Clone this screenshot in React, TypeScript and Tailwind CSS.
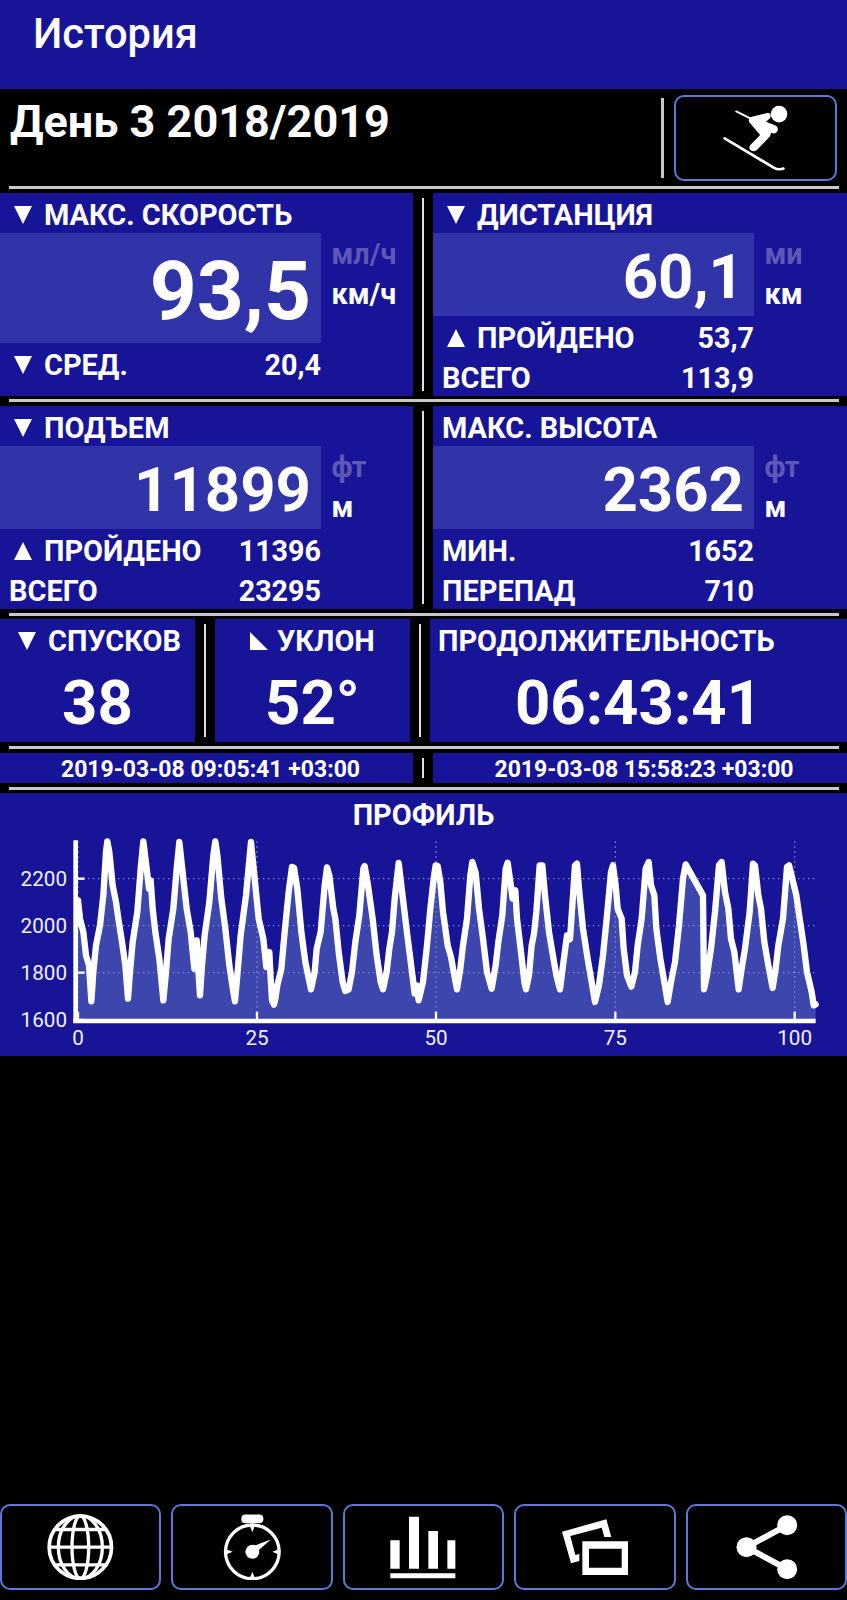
import React from "react";

const profile: [number, number][] = [
  [234, 345], [240, 400], [250, 440], [258, 510], [267, 540], [274, 648], [280, 560], [288, 480], [300, 420],
  [310, 330], [318, 200], [322, 168], [328, 200], [338, 300], [348, 350], [355, 400], [366, 470], [376, 540],
  [384, 640], [390, 560], [398, 470], [412, 380], [422, 250], [430, 168], [440, 250], [447, 310],
  [452, 285], [458, 370], [466, 440], [478, 520], [490, 645], [498, 560], [506, 460], [520, 370], [530, 250],
  [538, 170], [550, 280], [560, 370], [572, 440], [583, 550], [590, 465], [594, 540], [600, 630],
  [606, 540], [614, 450], [628, 350], [640, 210], [646, 168], [652, 210], [664, 340], [676, 430], [688, 540],
  [700, 620], [705, 648], [712, 570], [722, 450], [738, 330], [753, 170], [764, 280], [776, 400],
  [790, 460], [799, 545], [808, 500], [812, 580], [816, 645], [822, 658], [826, 640], [832, 600], [844, 550],
  [854, 440], [866, 320], [876, 245], [882, 247], [892, 310], [904, 440], [916, 530], [933, 612], [944, 560],
  [950, 490], [962, 440], [974, 300], [981, 246], [988, 270], [1000, 370], [1006, 400], [1016, 500], [1028, 590],
  [1036, 617], [1046, 612], [1056, 560], [1066, 470], [1078, 390], [1090, 250], [1094, 242], [1104, 300],
  [1118, 400], [1130, 510], [1142, 590], [1149, 612], [1160, 560], [1168, 490], [1176, 440], [1184, 340],
  [1196, 233], [1210, 350], [1222, 450], [1236, 560], [1244, 625], [1250, 600], [1256, 645],
  [1269, 590], [1281, 480], [1291, 370], [1301, 280], [1307, 240], [1313, 242], [1321, 290], [1329, 380],
  [1343, 480], [1353, 515], [1361, 560], [1371, 612], [1381, 550], [1389, 480], [1401, 400], [1411, 270],
  [1417, 230], [1427, 262], [1437, 370], [1449, 460], [1461, 560], [1475, 610], [1487, 540], [1495, 470],
  [1507, 390], [1517, 250], [1523, 232], [1531, 290], [1538, 340], [1546, 315], [1551, 400], [1563, 500],
  [1573, 590], [1578, 612], [1587, 570], [1595, 480], [1602, 445], [1609, 380], [1619, 240], [1627, 240],
  [1635, 330], [1647, 440], [1657, 500], [1669, 570], [1680, 612], [1689, 540], [1701, 450], [1710, 462],
  [1719, 330], [1725, 240], [1731, 235], [1737, 310], [1749, 430], [1763, 520], [1775, 590], [1785, 650],
  [1797, 600], [1809, 510], [1821, 390], [1833, 260], [1839, 240], [1847, 300], [1853, 370], [1865, 400],
  [1871, 490], [1881, 570], [1894, 604], [1905, 560], [1913, 480], [1925, 400], [1937, 250], [1946, 230],
  [1953, 300], [1963, 330], [1969, 430], [1981, 520], [1993, 590], [2003, 650], [2013, 590], [2025, 530],
  [2037, 420], [2049, 280], [2057, 237], [2109, 330], [2112, 612], [2121, 570], [2133, 490], [2145, 380],
  [2157, 240], [2165, 230], [2175, 320], [2185, 370], [2193, 460], [2203, 500], [2216, 612], [2225, 550],
  [2235, 490], [2249, 380], [2259, 235], [2265, 240], [2275, 330], [2283, 370], [2293, 470], [2305, 540],
  [2318, 608], [2327, 550], [2335, 480], [2349, 400], [2361, 245], [2367, 240], [2377, 280], [2389, 330],
  [2399, 400], [2411, 480], [2421, 560], [2435, 620], [2441, 660], [2447, 657],
];

const yTicks = [
  { label: "2200", y: 280 },
  { label: "2000", y: 421 },
  { label: "1800", y: 562 },
  { label: "1600", y: 704 },
];

const xTicks = [
  { label: "0", x: 234 },
  { label: "25", x: 771 },
  { label: "50", x: 1308 },
  { label: "75", x: 1846 },
  { label: "100", x: 2384 },
];

const shapes = {
  down: "0,0 18,0 9,18",
  up: "0,18 18,18 9,0",
  slope: "0,0 0,18 18,18",
};

const Mark = ({ kind }: { kind: keyof typeof shapes }) => (
  <svg className="w-[18px] h-[18px] shrink-0 fill-white" viewBox="0 0 18 18">
    <polygon points={shapes[kind]} />
  </svg>
);

const HLine = () => <div className="h-[3px] mx-[8.5px] bg-[#c8c8c8] shrink-0" />;

const VLine = () => <div className="w-[2px] my-[5px] bg-[#dedede] shrink-0" />;

type RowProps = { mark?: "down" | "up"; label: string; value?: string };

const Row = ({ mark, label, value }: RowProps) => (
  <div className="h-10 w-[321px] pt-[3px] flex items-center justify-between whitespace-nowrap text-[28.7px] leading-9 font-bold">
    <div className={`flex items-center gap-3 text-[28.95px] ${mark ? "pl-[14px]" : "pl-[9px]"}`}>
      {mark && <Mark kind={mark} />}
      <span>{label}</span>
    </div>
    {value && <span>{value}</span>}
  </div>
);

type PanelProps = {
  title: RowProps;
  value: string;
  units: [string, string];
  rows: RowProps[];
  tall?: boolean;
  className: string;
};

const Panel = ({ title, value, units, rows, tall, className }: PanelProps) => (
  <div className={`h-[203px] bg-[#181498] ${className}`}>
    <Row {...title} />
    <div className="flex">
      <div
        className={`w-[321px] pt-1.5 pr-[10px] flex items-center justify-end bg-[#3034a8] font-bold ${
          tall ? "h-[110px] text-[82px]" : "h-[83px] text-[61.7px]"
        }`}
      >
        {value}
      </div>
      <div className="pl-[10.5px] pt-px h-[83px] text-[28.8px] leading-10 font-bold whitespace-nowrap">
        <div className="text-[#5c58b8]">{units[0]}</div>
        <div>{units[1]}</div>
      </div>
    </div>
    {rows.map((row) => (
      <Row key={row.label} {...row} />
    ))}
  </div>
);

const Stat = ({ children, value, className }: { children: React.ReactNode; value: string; className: string }) => (
  <div className={`h-[123px] bg-[#181498] ${className}`}>
    <div className="h-10 pt-1 flex items-center text-[28.95px] leading-9 font-bold whitespace-nowrap">{children}</div>
    <div className="h-[83px] pt-1.5 flex items-center justify-center text-[61.7px] font-bold">{value}</div>
  </div>
);

const ProfileChart = () => {
  const line = profile.map(([x, y]) => `${x},${y}`).join(" ");
  return (
    <svg className="block w-full h-[263px]" viewBox="0 23 2541 789">
      <polygon points={`234,704 ${line} 2447,704`} fill="#3c46ac" />
      <g stroke="#8286d0" strokeWidth="4" strokeDasharray="4 11">
        {yTicks.slice(0, 3).map((t) => (
          <line key={t.label} x1="234" x2="2447" y1={t.y} y2={t.y} />
        ))}
        {xTicks.map((t) => (
          <line key={t.label} x1={t.x} x2={t.x} y1="168" y2="704" />
        ))}
      </g>
      <g stroke="#fff">
        <line x1="227" x2="227" y1="165" y2="713" strokeWidth="14" />
        <line x1="220" x2="2447" y1="707" y2="707" strokeWidth="13" />
        {yTicks.map((t) => (
          <line key={t.label} x1="234" x2="254" y1={t.y} y2={t.y} strokeWidth="7" />
        ))}
        {xTicks.map((t) => (
          <line key={t.label} x1={t.x} x2={t.x} y1="679" y2="704" strokeWidth="7" />
        ))}
      </g>
      <polyline points={line} fill="none" stroke="#fff" strokeWidth="19" strokeLinejoin="round" strokeLinecap="round" />
      <g fill="#f0f0ff" fontSize="62">
        {yTicks.map((t) => (
          <text key={t.label} x="201" y={t.y + 22} textAnchor="end">
            {t.label}
          </text>
        ))}
        {xTicks.map((t) => (
          <text key={t.label} x={t.x} y="780" textAnchor="middle">
            {t.label}
          </text>
        ))}
      </g>
    </svg>
  );
};

const SkierIcon = () => (
  <svg className="w-[68px] h-[70px]" viewBox="245 68 205 210" stroke="#fff" fill="none" strokeLinecap="round">
    <circle cx="417" cy="101" r="25" fill="#fff" stroke="none" />
    <path d="M288 93 L330 114" strokeWidth="6" />
    <path d="M326 111 L384 97 Q396 99 390 113 L378 124 L408 136 Q418 145 410 155 Q404 162 393 157 L390 168 L350 209 Q338 218 329 208 Q325 200 331 193 L360 164 L326 124 Z" fill="#fff" stroke="none" />
    <path d="M253 174 L402 263 Q415 270 430 265" strokeWidth="8" />
  </svg>
);

const GlobeIcon = () => (
  <svg className="w-[66.7px] h-[66.7px]" viewBox="142 70.5 200 200" stroke="#fff" strokeWidth="10" fill="none">
    <circle cx="242" cy="170" r="93.5" strokeWidth="11" />
    <ellipse cx="242" cy="170" rx="66" ry="94" />
    <ellipse cx="242" cy="170" rx="25" ry="94" />
    <path d="M148 170 H336 M165 117 H319 M165 223 H319" />
  </svg>
);

const StopwatchIcon = () => (
  <svg className="w-[66.7px] h-[66.7px]" viewBox="656 71.5 200 200" fill="#fff">
    <rect x="723" y="73" width="66" height="26" rx="12" />
    <circle cx="756" cy="185" r="80.5" fill="none" stroke="#fff" strokeWidth="10" />
    <path d="M749 108 H763 L756 126 Z M749 262 H763 L756 245 Z M679 178 V192 L697 185 Z M833 178 V192 L816 185 Z" />
    <circle cx="756" cy="185" r="21" />
    <path d="M762 167 L811 148 L774 181 Z" />
  </svg>
);

const BarsIcon = () => (
  <svg className="w-[66.7px] h-[66.7px]" viewBox="1171 71 200 200" fill="#fff">
    <path d="M1172 150h28v85h-28z M1228 79h30v156h-30z M1286 122h29v113h-29z M1343 150h24v85h-24z M1172 249h195v15h-195z" />
  </svg>
);

const PhotosIcon = () => (
  <svg className="w-[66.7px] h-[66.7px]" viewBox="416 71 200 200" fill="#fff">
    <path d="M416 124 L549 87 L564 140 H543 L535 112 L441 137 L456 194 L468 191 V212 L443 219 Z" />
    <path d="M477 153h137v101H477z M497 175v57h98v-57z" fillRule="evenodd" />
  </svg>
);

const ShareIcon = () => (
  <svg className="w-[66.7px] h-[66.7px]" viewBox="929.5 70.5 200 200" fill="#fff">
    <path d="M1092 104 L970 170 L1092 236" fill="none" stroke="#fff" strokeWidth="18" />
    <circle cx="970" cy="170" r="30" />
    <circle cx="1092" cy="104" r="30" />
    <circle cx="1092" cy="236" r="30" />
  </svg>
);

const navIcons = [GlobeIcon, StopwatchIcon, BarsIcon, PhotosIcon, ShareIcon];

const App: React.FC = () => {
  return (
    <div className="w-[847px] h-[1600px] flex flex-col bg-black text-white overflow-hidden font-['Roboto',sans-serif]">
      <header className="h-[89px] shrink-0 bg-[#181498] pl-[33px] pt-[9px]">
        <h1 className="text-[41.6px] leading-[50px] font-medium">История</h1>
      </header>

      <div className="h-[97px] shrink-0 flex">
        <h2 className="flex-1 pl-[10px] pt-[6px] text-[45px] leading-[54px] font-bold">День 3 2018/2019</h2>
        <div className="w-[3px] mt-[9px] mb-2 bg-[#c8c8c8]" />
        <button className="ml-[10px] mr-[10px] mt-[6px] w-[163px] h-[86px] flex items-center justify-center rounded-[10px] border-2 border-[#5b79d6]">
          <SkierIcon />
        </button>
      </div>
      <HLine />

      <section className="mt-1 flex gap-[9px]">
        <Panel
          className="w-[413px]"
          title={{ mark: "down", label: "МАКС. СКОРОСТЬ" }}
          value="93,5"
          units={["мл/ч", "км/ч"]}
          rows={[{ mark: "down", label: "СРЕД.", value: "20,4" }]}
          tall
        />
        <VLine />
        <Panel
          className="flex-1"
          title={{ mark: "down", label: "ДИСТАНЦИЯ" }}
          value="60,1"
          units={["ми", "км"]}
          rows={[
            { mark: "up", label: "ПРОЙДЕНО", value: "53,7" },
            { label: "ВСЕГО", value: "113,9" },
          ]}
        />
      </section>
      <div className="h-[3px]" />
      <HLine />

      <section className="mt-1 flex gap-[9px]">
        <Panel
          className="w-[413px]"
          title={{ mark: "down", label: "ПОДЪЕМ" }}
          value="11899"
          units={["фт", "м"]}
          rows={[
            { mark: "up", label: "ПРОЙДЕНО", value: "11396" },
            { label: "ВСЕГО", value: "23295" },
          ]}
        />
        <VLine />
        <Panel
          className="flex-1"
          title={{ label: "МАКС. ВЫСОТА" }}
          value="2362"
          units={["фт", "м"]}
          rows={[
            { label: "МИН.", value: "1652" },
            { label: "ПЕРЕПАД", value: "710" },
          ]}
        />
      </section>
      <div className="h-[4px]" />
      <HLine />

      <section className="mt-[3px] flex gap-[9px]">
        <Stat value="38" className="w-[195px]">
          <div className="flex items-center gap-3 pl-[18px]">
            <Mark kind="down" />
            СПУСКОВ
          </div>
        </Stat>
        <VLine />
        <Stat value="52°" className="w-[195px]">
          <div className="flex items-center gap-[9px] pl-[35px]">
            <Mark kind="slope" />
            УКЛОН
          </div>
        </Stat>
        <VLine />
        <Stat value="06:43:41" className="flex-1">
          <span className="pl-[8px]">ПРОДОЛЖИТЕЛЬНОСТЬ</span>
        </Stat>
      </section>
      <div className="h-[4px]" />
      <HLine />

      <section className="mt-1 flex gap-[9px] text-center text-[23px] leading-[33px] font-bold">
        <div className="w-[413px] h-[30px] pl-2 bg-[#181498]">2019-03-08 09:05:41 +03:00</div>
        <VLine />
        <div className="flex-1 h-[30px] pl-2 bg-[#181498]">2019-03-08 15:58:23 +03:00</div>
      </section>
      <div className="h-[4px]" />
      <HLine />

      <section className="relative mt-[3px] bg-[#181498]">
        <h3 className="absolute inset-x-0 top-[2px] text-center text-[28.95px] leading-10 font-bold">ПРОФИЛЬ</h3>
        <ProfileChart />
      </section>

      <nav className="mt-auto mb-[10px] flex gap-[10px]">
        {navIcons.map((Icon, index) => (
          <button
            key={index}
            className="flex-1 h-[86px] flex items-center justify-center rounded-[10px] border-2 border-[#5b79d6]"
          >
            <Icon />
          </button>
        ))}
      </nav>
    </div>
  );
};

export default App;
